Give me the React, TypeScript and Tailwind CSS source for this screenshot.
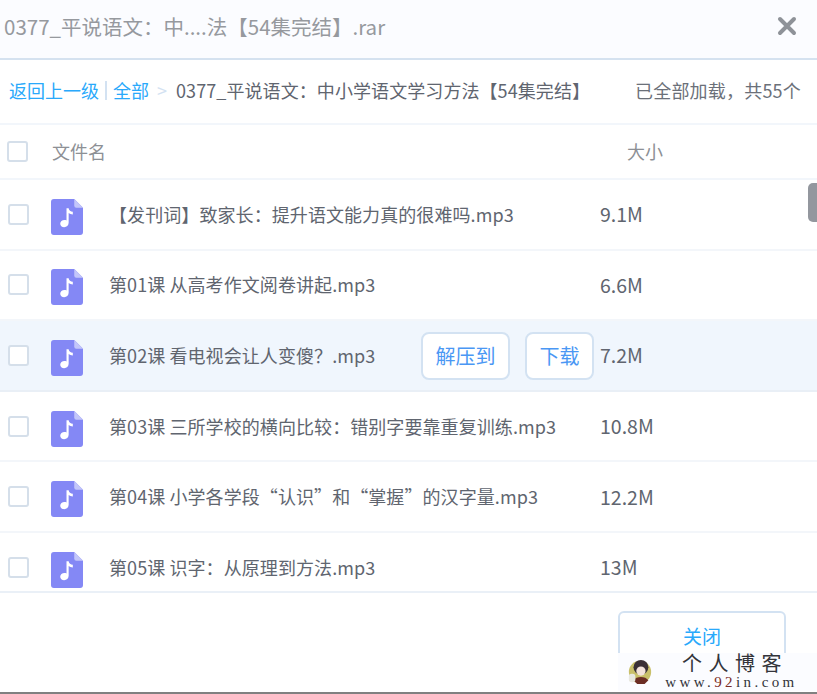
const FONT = "font-['Noto_Sans_CJK_SC','Noto_Sans',sans-serif]";

const FILES = [
  { name: '【发刊词】致家长：提升语文能力真的很难吗.mp3', size: '9.1M' },
  { name: '第01课 从高考作文阅卷讲起.mp3', size: '6.6M' },
  { name: '第02课 看电视会让人变傻？.mp3', size: '7.2M', hover: true },
  { name: '第03课 三所学校的横向比较：错别字要靠重复训练.mp3', size: '10.8M' },
  { name: '第04课 小学各学段“认识”和“掌握”的汉字量.mp3', size: '12.2M' },
  { name: '第05课 识字：从原理到方法.mp3', size: '13M' },
];

function Check() {
  return <span className="block h-[21px] w-[21px] shrink-0 rounded-[3px] border-2 border-[#d5dfea] bg-white" />;
}

function MusicFile() {
  return (
    <svg width="32" height="36" viewBox="0 0 33 37" className="mt-[5px] shrink-0">
      <path d="M3 0H24L33 9V34a3 3 0 0 1-3 3H3a3 3 0 0 1-3-3V3a3 3 0 0 1 3-3Z" fill="#8488f5" />
      <path d="M24 0L33 9H26a2 2 0 0 1-2-2Z" fill="#c3c6fa" />
      <path d="M16 9.500h2.200c.3 2.600 2 3.400 4.300 3.600v2.700c-1.700 0-3.200-.5-4.300-1.400V24.500c0 2.700-2.100 4.500-4.600 4.500-2.400 0-4.100-1.500-4.100-3.500 0-2.200 2-3.800 4.400-3.800.8 0 1.500.1 2.100.4Z" fill="#fff" />
    </svg>
  );
}

function Row({ name, size, hover }: { name: string; size: string; hover?: boolean }) {
  return (
    <div className={`flex h-[70.6px] shrink-0 items-center border-b-2 pl-[8px] ${hover ? 'border-[#e9eff6] bg-[#f0f6fd]' : 'border-[#f3f6fa]'}`}>
      <Check />
      <span className="ml-[22px] flex"><MusicFile /></span>
      <span className="ml-[26px] w-[312px] whitespace-nowrap text-[18px] tracking-[0.08px] text-[#60656f]">{name}</span>
      <div className="mt-[2px] flex w-[179px] items-center justify-end gap-[15px] pr-[6px]">
        {hover && (
          <>
            <button className="h-[48px] w-[89px] rounded-[8px] border-2 border-[#d3e2f2] bg-white text-[20px] text-[#4a97f4]">解压到</button>
            <button className="h-[48px] w-[69px] rounded-[8px] border-2 border-[#d3e2f2] bg-white text-[20px] text-[#4a97f4]">下载</button>
          </>
        )}
      </div>
      <span className="-mt-[1px] whitespace-nowrap text-[19.500px] text-[#60656f]">{size}</span>
    </div>
  );
}

export default function App() {
  return (
    <div className={`relative flex h-[694px] w-[817px] flex-col overflow-hidden bg-white ${FONT}`}>
      <div className="flex h-[60px] shrink-0 items-center justify-between border-b-2 border-[#d5e2f0] bg-[#fbfcff] pb-[6px] pl-[4px] pr-[20px]">
        <span className="whitespace-nowrap text-[20.500px] text-[#96999e]">0377_平说语文：中....法【54集完结】.rar</span>
        <svg width="20" height="20" viewBox="0 0 20 20">
          <path d="M3 3L17 17M17 3L3 17" stroke="#8e9298" strokeWidth="4" strokeLinecap="round" />
        </svg>
      </div>

      <div className="flex h-[65px] shrink-0 items-center whitespace-nowrap border-b-2 border-[#f2f6fb] pb-[3px] pl-[9px] pr-[16px] text-[18px]">
        <span className="text-[#29a9fb]">返回上一级</span>
        <span className="mx-[6px] h-[19px] w-[2px] bg-[#d3e2f2]" />
        <span className="text-[#29a9fb]">全部</span>
        <span className="ml-[8px] mr-[9px] text-[#d3e2f2]">&gt;</span>
        <span className="tracking-[0.08px] text-[#60656f]">0377_平说语文：中小学语文学习方法【54集完结】</span>
        <span className="ml-auto tracking-[0.2px] text-[#6b7079]">已全部加载，共55个</span>
      </div>

      <div className="flex h-[55px] shrink-0 items-center border-b-2 border-[#f2f6fb] pl-[7px]">
        <Check />
        <span className="ml-[24px] w-[575px] text-[18px] text-[#8d9095]">文件名</span>
        <span className="text-[18px] text-[#8d9095]">大小</span>
      </div>

      <div className="flex h-[413px] shrink-0 flex-col overflow-hidden border-b-2 border-[#eaf0f7]">
        {FILES.map(f => (
          <Row key={f.name} name={f.name} size={f.size} hover={f.hover} />
        ))}
      </div>

      <div className="flex flex-1 justify-end pr-[31px] pt-[18px]">
        <button className="h-[50px] w-[168px] rounded-[6px] border-2 border-[#d3e2f2] bg-white text-[19px] text-[#29a9fb]">关闭</button>
      </div>

      {/* scrollbar thumb */}
      <div className="absolute left-[808px] top-[183px] h-[39px] w-[9px] rounded-l-[5px] bg-[#93979e]" />

      {/* watermark */}
      <div className="absolute left-[618px] top-[653px] flex h-[38px] w-[199px] items-center bg-[#fbfcff]">
        <svg width="26" height="30" viewBox="0 0 28 30" className="ml-[9px] shrink-0">
          <circle cx="14" cy="15" r="12" fill="#c9c06a" />
          <circle cx="15" cy="10" r="8" fill="#3a3035" />
          <circle cx="15" cy="14" r="5" fill="#f3e3da" />
          <path d="M7 24c3-5 13-5 16 0l-4 4h-8Z" fill="#6b2d24" />
          <rect x="2" y="17" width="7" height="9" rx="3" fill="#e8e8e0" />
        </svg>
        <div className="ml-[13px] flex w-[131px] flex-col items-center">
          <span className="pl-[7px] text-[20px] leading-[21px] tracking-[6.500px] text-[#33343a] font-['Liberation_Serif','Noto_Sans_CJK_SC',serif]">个人博客</span>
          <span className="whitespace-nowrap font-['Liberation_Serif',serif] text-[15px] leading-[15px] tracking-[3.400px] text-[#33343a]">www.<span className="text-[#7a2b25]">92</span>in.com</span>
        </div>
      </div>

      {/* bottom edge of the window */}
      <div className="absolute bottom-0 left-0 h-[2px] w-full bg-[#808080]" />
    </div>
  );
}
